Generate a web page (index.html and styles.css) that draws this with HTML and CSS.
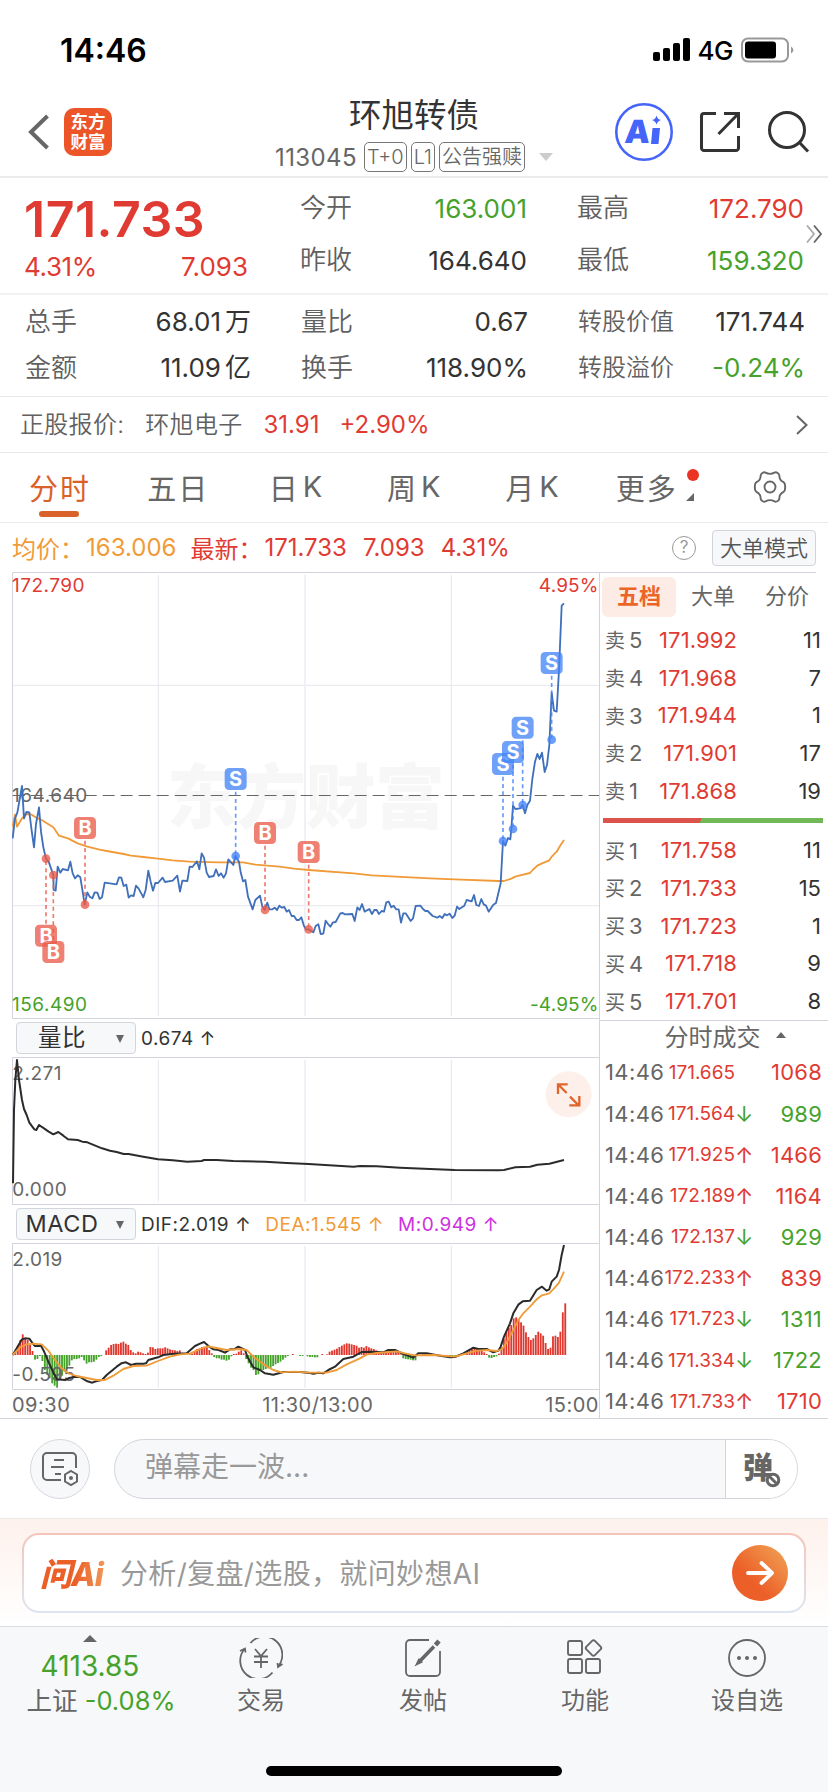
FILE: index.html
```html
<!DOCTYPE html>
<html lang="zh-CN">
  <head>
    <meta charset="utf-8">
    <title>环旭转债 113045</title>
    <link rel="stylesheet" href="styles.css">
  </head>
  <body>
    <div class="status-bar">
      <span class="clock">14:46</span>
      <div class="status-icons">
        <svg width="37" height="24" viewBox="0 0 37 24">
          <rect x="0" y="14" width="7" height="9" rx="2"/>
          <rect x="10" y="10" width="7" height="13" rx="2"/>
          <rect x="20" y="5" width="7" height="18" rx="2"/>
          <rect x="30" y="0" width="7" height="23" rx="2"/>
        </svg>
        <span class="network">4G</span>
        <svg width="54" height="26" viewBox="0 0 54 26">
          <rect x="1" y="1.500" width="46" height="23" rx="6" fill="none" stroke="#999" stroke-width="2"/>
          <rect x="4" y="4.500" width="31" height="17" rx="3"/>
          <path d="M50 9.500q5 3.500 0 7z" fill="#999"/>
        </svg>
      </div>
    </div>

    <header class="header">
      <div class="header-left">
        <svg width="22" height="36" viewBox="0 0 22 36" fill="none" stroke="#666" stroke-width="4"><path d="M19.500 2 3 18l16.500 16"/></svg>
        <div class="app-logo"><span>东方</span><span>财富</span></div>
      </div>
      <div class="header-title">
        <h1>环旭转债</h1>
        <div class="sub">
          <span class="code">113045</span>
          <span class="tag">T+0</span>
          <span class="tag">L1</span>
          <span class="tag">公告强赎</span>
          <svg class="drop" width="14" height="8" viewBox="0 0 14 8"><path d="M0 0h14L7 8z" fill="#ccc"/></svg>
        </div>
      </div>
      <div class="header-right">
        <svg width="60" height="60" viewBox="0 0 60 60">
          <circle cx="30" cy="30" r="27.700" fill="none" stroke="#4565f8" stroke-width="2.600"/>
          <text class="ai-text" x="11" y="41" transform="skewX(-4) translate(2 0)">A</text>
          <path d="M38.500 26h7.500l-1.500 16H37z M42.500 13.500q1 4 4.500 4.500-3.500 1-4.500 4.500-1-3.500-4.500-4.500 3.500-.5 4.500-4.500z" fill="#4565f8"/>
        </svg>
        <svg width="44" height="44" viewBox="0 0 44 44" fill="none" stroke="#333" stroke-width="3">
          <path d="M18 3.500H6a2.500 2.500 0 0 0-2.500 2.500v32A2.500 2.500 0 0 0 6 40.500h32a2.500 2.500 0 0 0 2.500-2.500V26M26 3.500h14.500V18M40 4 20.500 24"/>
        </svg>
        <svg width="44" height="44" viewBox="0 0 44 44" fill="none" stroke="#333" stroke-width="3">
          <circle cx="21" cy="20" r="17.500"/><path d="M33 32l9 9.500"/>
        </svg>
      </div>
    </header>

    <section class="quote">
      <div class="last">
        <div class="last-price red">171.733</div>
        <div class="last-change red"><span>4.31%</span><span>7.093</span></div>
      </div>
      <dl class="pairs">
        <div><dt>今开</dt><dd class="green">163.001</dd></div>
        <div><dt>最高</dt><dd class="red">172.790</dd></div>
        <div><dt>昨收</dt><dd>164.640</dd></div>
        <div><dt>最低</dt><dd class="green">159.320</dd></div>
      </dl>
      <svg class="more" width="16" height="18" viewBox="0 0 16 18" fill="none" stroke-width="1.800">
        <path d="M1 .5 8 9l-7 8.500" stroke="#aaa"/><path d="M8 .5 15 9l-7 8.500" stroke="#666"/>
      </svg>
    </section>

    <dl class="stats">
      <div><dt>总手</dt><dd>68.01<i>万</i></dd></div>
      <div><dt>量比</dt><dd>0.67</dd></div>
      <div><dt class="long">转股价值</dt><dd>171.744</dd></div>
      <div><dt>金额</dt><dd>11.09<i>亿</i></dd></div>
      <div><dt>换手</dt><dd>118.90%</dd></div>
      <div><dt class="long">转股溢价</dt><dd class="green">-0.24%</dd></div>
    </dl>

    <div class="underlying">
      <span class="u-label">正股报价:</span>
      <span class="u-name">环旭电子</span>
      <span class="u-price red">31.91</span>
      <span class="red">+2.90%</span>
      <svg width="12" height="20" viewBox="0 0 12 20" fill="none" stroke="#666" stroke-width="2"><path d="M1 1l9.500 9L1 19"/></svg>
    </div>

    <nav class="tabs">
      <a class="active">分时</a>
      <a>五日</a>
      <a>日<i>K</i></a>
      <a>周<i>K</i></a>
      <a>月<i>K</i></a>
      <a class="tab-more">更多<svg width="8" height="8" viewBox="0 0 8 8"><path d="M8 0v8H0z" fill="#666"/></svg><b class="dot"></b></a>
      <a>
        <svg width="34" height="34" viewBox="0 0 34 34" fill="none" stroke="#666" stroke-width="1.900">
          <path d="M12.500 2.600q4.500 2.600 9 0 1.500-.7 3.200.4 1.700 1.200 1.700 2.800-.2 4.200 4.200 6.400 1.600 1 1.600 4.800t-1.600 4.800q-4.400 2.200-4.200 6.400 0 1.600-1.700 2.800-1.700 1.100-3.200.4-4.500-2.600-9 0-1.500.7-3.200-.4-1.700-1.200-1.700-2.800.2-4.200-4.200-6.400Q1.800 20.800 1.800 17t1.600-4.800q4.400-2.200 4.200-6.400 0-1.600 1.700-2.800 1.700-1.100 3.200-.4z"/>
          <circle cx="17" cy="17" r="5.500"/>
        </svg>
      </a>
    </nav>

    <div class="summary">
      <span class="orange">均价：</span><span class="orange num">163.006</span>
      <span class="red">最新：</span><span class="red num">171.733</span>
      <span class="red num">7.093</span>
      <span class="red num">4.31%</span>
      <span class="help">?</span>
      <button type="button" class="mode">大单模式</button>
    </div>

    <main class="board">
      <div class="charts">
        <!-- chart units are thirds of a pixel -->
        <svg class="chart price-chart" viewBox="36 36 1761 1341">
          <g class="watermark"><text x="500" y="790" textLength="835">东方财富</text></g>
          <g class="grid">
            <path d="M38 376H1797M38 1037H1797M475 44V1368M1354 44V1368"/>
            <path class="mid" d="M915 44V1368"/>
          </g>
          <path class="frame" d="M1797 37.500H37.500V1375.500H1797"/>
          <path class="prev-close" d="M38 706.500H1797"/>
          <text class="axis" x="36" y="726">164.640</text>
          <polyline class="line-avg" points="38,800 45,764 51,800 66,775 80,762 95,764 110,774 125,780 160,802 177,827 204,835 233,850 262,860 299,869 320,873 371,882 393,887 430,891 474,896 518,901 569,905 656,907 729,907 766,914 838,920 882,926 926,930 1061,940 1115,946 1188,950 1290,955 1364,958 1495,963 1512,963 1534,956 1546,950 1560,946 1590,939 1598,930 1612,917 1626,910 1648,901 1655,890 1670,875 1680,858 1692,840"/>
          <polyline class="line-price" points="38,835 45,775 52,758 66,678 72,775 79,756 88,757 95,812 102,862 108,792 117,742 123,815 130,862 138,896 146,905 153,925 160,945 161,990 167,992 173,920 181,938 188,927 204,931 211,905 218,940 225,955 233,946 241,952 248,995 254,1034 262,997 269,1010 277,1015 284,997 292,998 299,1017 306,1012 314,968 350,973 357,952 364,953 371,978 379,974 386,1013 393,1006 401,1008 408,977 416,986 430,1012 437,990 445,932 452,965 459,992 466,969 474,969 488,953 495,966 518,962 532,947 540,995 547,962 562,963 569,920 577,921 591,904 598,928 605,880 612,893 620,938 627,951 641,948 648,928 656,948 663,940 671,953 678,940 685,898 700,915 706,888 717,905 722,937 729,964 736,960 744,1010 758,1048 766,1020 780,1007 787,1040 794,1050 802,1028 808,1048 817,1048 824,1043 831,1050 838,1037 846,1043 853,1041 860,1055 867,1050 875,1068 882,1068 890,1080 897,1080 904,1072 912,1098 918,1108 926,1108 940,1117 947,1098 955,1093 962,1122 970,1121 977,1082 984,1092 991,1100 999,1087 1007,1086 1021,1060 1028,1059 1035,1063 1057,1062 1064,1083 1072,1042 1079,1050 1086,1032 1094,1055 1108,1047 1116,1062 1123,1050 1130,1050 1137,1062 1145,1053 1152,1055 1159,1027 1166,1025 1174,1042 1181,1037 1188,1048 1196,1048 1203,1088 1210,1060 1217,1060 1232,1083 1239,1075 1247,1038 1261,1037 1269,1047 1276,1053 1283,1053 1298,1068 1312,1073 1319,1068 1327,1074 1334,1062 1341,1066 1349,1061 1357,1074 1364,1067 1371,1040 1378,1047 1393,1037 1400,1020 1415,1024 1422,1005 1429,1035 1437,1038 1444,1017 1451,1033 1458,1037 1466,1055 1480,1034 1488,1029 1495,1000 1502,970 1509,843 1516,857 1524,834 1531,838 1534,807 1539,737 1546,747 1560,745 1568,735 1575,760 1582,735 1590,722 1597,657 1605,605 1612,582 1619,597 1626,578 1634,636 1641,615 1648,555 1655,398 1662,452 1670,455 1677,330 1685,137 1692,130"/>
          <g id="trades"></g>
          <text class="axis up" x="36" y="95">172.790</text>
          <text class="axis up end" x="1796" y="95">4.95%</text>
          <text class="axis down" x="36" y="1352">156.490</text>
          <text class="axis down end" x="1796" y="1352">-4.95%</text>
        </svg>

        <div class="indicator">
          <div class="picker"><span>量比</span><i></i></div>
          <span>0.674 <em>↑</em></span>
        </div>
        <svg class="chart ratio-chart" viewBox="36 141 1761 444">
          <g class="grid">
            <path d="M475 150V575M1354 150V575"/>
            <path class="mid" d="M915 150V575"/>
          </g>
          <path class="frame" d="M1797 142.500H37.500V583.500H1797"/>
          <text class="axis" x="37" y="209">2.271</text>
          <text class="axis" x="37" y="557">0.000</text>
          <polyline class="line-dark" points="39,520 42,300 46,210 51,150 57,210 66,270 72,297 80,315 88,338 103,358 109,360 117,345 132,355 146,365 160,373 175,366 190,377 204,388 233,390 247,395 262,397 306,415 330,422 350,426 371,432 386,432 430,440 474,448 518,451 562,455 605,453 612,450 650,450 700,453 795,455 860,459 926,462 1061,470 1080,468 1130,469 1200,473 1290,477 1364,480 1495,481 1512,480 1546,472 1590,470 1612,464 1648,461 1692,450"/>
          <circle cx="1706" cy="253" r="69" fill="#fdf0ea"/>
          <path d="M1700 249L1676 225M1674 252V223H1703M1710 260L1735 285M1738 258V286H1708" fill="none" stroke="#e0652c" stroke-width="7"/>
        </svg>

        <div class="indicator">
          <div class="picker"><span>MACD</span><i></i></div>
          <span class="dif">DIF:2.019 <em>↑</em></span>
          <span class="orange dea">DEA:1.545 <em>↑</em></span>
          <span class="purple">M:0.949 <em>↑</em></span>
        </div>
        <svg class="chart macd-chart" viewBox="36 699 1761 441">
          <g class="grid">
            <path d="M475 708V1133M1354 708V1133"/>
            <path class="mid" d="M915 708V1133"/>
          </g>
          <path class="frame" d="M1797 700.500H37.500V1138.500H1797"/>
          <g id="macd-bars"></g>
          <text class="axis" x="37" y="767">2.019</text>
          <text class="axis" x="37" y="1114">-0.595</text>
          <polyline class="line-dark" points="38,1035 50,1015 66,988 75,985 88,986 100,1003 105,1008 123,1007 131,1022 145,1055 160,1088 171,1108 195,1110 208,1104 225,1100 240,1101 262,1114 277,1118 290,1113 306,1110 320,1095 350,1070 364,1060 378,1057 393,1065 408,1061 430,1061 438,1060 445,1050 474,1042 490,1035 520,1031 560,1030 585,1008 600,1001 612,996 628,1010 640,1018 656,1020 675,1028 690,1018 702,1018 715,1010 735,1020 742,1040 760,1072 780,1080 795,1090 820,1094 850,1086 900,1086 930,1089 940,1091 955,1088 970,1090 985,1080 1005,1070 1030,1047 1060,1040 1085,1026 1110,1025 1150,1027 1165,1020 1185,1020 1210,1032 1240,1043 1255,1030 1280,1030 1320,1037 1350,1042 1365,1041 1390,1030 1420,1013 1435,1017 1460,1017 1480,1027 1495,1022 1502,1010 1512,980 1530,940 1540,910 1555,884 1568,874 1590,872 1610,840 1626,830 1640,842 1648,838 1655,815 1670,800 1677,780 1685,735 1692,705"/>
          <polyline class="line-avg" points="38,1035 60,1012 80,1003 100,1001 125,1003 145,1022 165,1050 185,1075 205,1090 230,1098 260,1104 290,1110 315,1110 340,1097 370,1077 400,1068 440,1067 474,1053 510,1040 540,1033 570,1031 600,1017 625,1009 650,1014 680,1020 720,1017 740,1020 760,1040 790,1063 820,1080 845,1087 880,1085 930,1088 950,1088 980,1088 1010,1080 1040,1063 1080,1045 1100,1034 1130,1029 1190,1024 1215,1030 1245,1036 1300,1035 1365,1040 1400,1030 1430,1022 1460,1020 1490,1023 1505,1018 1520,998 1540,960 1555,930 1570,910 1590,890 1610,868 1626,856 1648,850 1665,832 1677,818 1692,785"/>
        </svg>
        <div class="times"><span>09:30</span><span>11:30/13:00</span><span>15:00</span></div>
      </div>

      <aside class="side">
        <div class="side-tabs"><span class="active">五档</span><span>大单</span><span>分价</span></div>
        <div class="book">
          <div><span>卖<b>5</b></span><span class="red">171.992</span><span>11</span></div>
          <div><span>卖<b>4</b></span><span class="red">171.968</span><span>7</span></div>
          <div><span>卖<b>3</b></span><span class="red">171.944</span><span>1</span></div>
          <div><span>卖<b>2</b></span><span class="red">171.901</span><span>17</span></div>
          <div><span>卖<b>1</b></span><span class="red">171.868</span><span>19</span></div>
        </div>
        <div class="ratio-bar"></div>
        <div class="book">
          <div><span>买<b>1</b></span><span class="red">171.758</span><span>11</span></div>
          <div><span>买<b>2</b></span><span class="red">171.733</span><span>15</span></div>
          <div><span>买<b>3</b></span><span class="red">171.723</span><span>1</span></div>
          <div><span>买<b>4</b></span><span class="red">171.718</span><span>9</span></div>
          <div><span>买<b>5</b></span><span class="red">171.701</span><span>8</span></div>
        </div>
        <div class="ticks-title">分时成交<svg width="10" height="6" viewBox="0 0 10 6"><path d="M5 0l5 6H0z" fill="#666"/></svg></div>
        <div class="ticks">
          <div><span>14:46</span><span class="red">171.665</span><em></em><span class="red">1068</span></div>
          <div><span>14:46</span><span class="red">171.564</span><em class="green">↓</em><span class="green">989</span></div>
          <div><span>14:46</span><span class="red">171.925</span><em class="red">↑</em><span class="red">1466</span></div>
          <div><span>14:46</span><span class="red">172.189</span><em class="red">↑</em><span class="red">1164</span></div>
          <div><span>14:46</span><span class="red">172.137</span><em class="green">↓</em><span class="green">929</span></div>
          <div><span>14:46</span><span class="red">172.233</span><em class="red">↑</em><span class="red">839</span></div>
          <div><span>14:46</span><span class="red">171.723</span><em class="green">↓</em><span class="green">1311</span></div>
          <div><span>14:46</span><span class="red">171.334</span><em class="green">↓</em><span class="green">1722</span></div>
          <div><span>14:46</span><span class="red">171.733</span><em class="red">↑</em><span class="red">1710</span></div>
        </div>
      </aside>
    </main>

    <div class="danmu">
      <div class="danmu-set">
        <svg width="38" height="36" viewBox="0 0 38 36" fill="none" stroke="#666" stroke-width="2">
          <path d="M20 29H6a4 4 0 0 1-4-4V6a4 4 0 0 1 4-4h25a4 4 0 0 1 4 4v11M13 9h10M10 16h13M14 23h6"/>
          <path d="M30 20l6 3.500v7L30 34l-6-3.500v-7z"/><circle cx="30" cy="27" r="1" fill="#666"/>
        </svg>
      </div>
      <div class="danmu-input">
        <span>弹幕走一波...</span>
        <div class="danmu-off">
          <b>弹</b>
          <svg width="16" height="16" viewBox="0 0 16 16" fill="#fff" stroke="#666" stroke-width="3"><circle cx="8" cy="8" r="5.800"/><path d="M4 4l8 8"/></svg>
        </div>
      </div>
    </div>

    <div class="ask">
      <div class="ask-box">
        <span class="ask-logo">问Ai</span>
        <span class="ask-hint">分析/复盘/选股，就问妙想AI</span>
        <div class="ask-go">
          <svg width="28" height="24" viewBox="0 0 28 24" fill="none" stroke="#fff" stroke-width="3.800" stroke-linecap="round" stroke-linejoin="round"><path d="M2 12h24M15.500 2 26 12 15.500 22"/></svg>
        </div>
      </div>
    </div>

    <footer class="bottom">
      <div class="index">
        <svg width="14" height="7" viewBox="0 0 14 7"><path d="M7 0l7 7H0z" fill="#666"/></svg>
        <span class="green index-value">4113.85</span>
        <span class="index-name">上证 <span class="green">-0.08%</span></span>
      </div>
      <div class="item">
        <svg width="44" height="40" viewBox="0 0 44 40" fill="none" stroke="#666" stroke-width="1.800">
          <path d="M11.500 5A18 18 0 0 1 39 28.500M33.500 34.500A18 18 0 0 1 5.500 11M1 13l5-2.500.5 4M38.500 25l.5 4 4.500-3M16 11l6 7 6-7M15 18.500h14M15 24h14M22 18v12"/>
        </svg>
        <span>交易</span>
      </div>
      <div class="item">
        <svg width="44" height="40" viewBox="0 0 44 40" fill="none" stroke="#666" stroke-width="1.800">
          <path d="M28 2H9a4 4 0 0 0-4 4v28a4 4 0 0 0 4 4h26a4 4 0 0 0 4-4V13"/>
          <path d="M18 24 33 8.500" stroke-width="3.600"/><path d="M34.500 7 38 3" stroke-width="4.500"/><path d="M15.500 26.500l5-2.500-2.500-2.500z" fill="#666"/>
        </svg>
        <span>发帖</span>
      </div>
      <div class="item">
        <svg width="44" height="40" viewBox="0 0 44 40" fill="none" stroke="#666" stroke-width="1.900">
          <rect x="5" y="3" width="14" height="14" rx="2"/><rect x="5" y="21" width="14" height="14" rx="2"/><rect x="23" y="21" width="14" height="14" rx="2"/>
          <rect x="24.500" y="4" width="12" height="12" rx="2" transform="rotate(45 30.500 10)"/>
        </svg>
        <span>功能</span>
      </div>
      <div class="item">
        <svg width="44" height="40" viewBox="0 0 44 40" fill="none" stroke="#666" stroke-width="1.800">
          <circle cx="22" cy="20" r="18"/><g fill="#666" stroke="none"><circle cx="14" cy="20" r="2"/><circle cx="22" cy="20" r="2"/><circle cx="30" cy="20" r="2"/></g>
        </svg>
        <span>设自选</span>
      </div>
      <div class="home-bar"></div>
    </footer>

    <script src="chart.js"></script>
  </body>
</html>
```

FILE: styles.css
```css
* {
  box-sizing: border-box;
}
body {
  margin: 0;
  width: 828px;
  height: 1792px;
  background: #fff;
  color: #333;
  font-family: Inter, "Noto Sans CJK SC", sans-serif;
  font-size: 26px;
  overflow: hidden;
}
h1, dl, dd {
  margin: 0;
}
svg {
  display: block;
  flex: none;
}
i, em {
  font-style: normal;
}
.red { color: #df3b33; }
.green { color: #46a22b; }
.orange { color: #f09b37; }
.purple { color: #cc33dd; }

/* status bar */
.status-bar {
  display: flex;
  justify-content: space-between;
  align-items: center;
  height: 88px;
  padding: 12px 33px 0 60px;
  color: #000;
}
.clock {
  font-size: 32px;
  font-weight: 600;
}
.status-icons {
  display: flex;
  align-items: center;
}
.network {
  margin: 0 8px;
  font-size: 26px;
  font-weight: 500;
  letter-spacing: -0.5px;
}

/* header */
.header {
  display: flex;
  justify-content: space-between;
  height: 90px;
  padding: 0 18px 0 28px;
  border-bottom: 2px solid #ebebec;
}
.header-left,
.header-right {
  display: flex;
  align-items: center;
}
.header-left {
  gap: 14px;
  width: 190px;
}
.header-right {
  justify-content: flex-end;
  gap: 24px;
  width: 200px;
}
.app-logo {
  display: flex;
  flex-direction: column;
  justify-content: center;
  width: 48px;
  height: 48px;
  border-radius: 10px;
  background: #ec5528;
  color: #fff;
  font-size: 17.5px;
  font-weight: 700;
  line-height: 20px;
  text-align: center;
}
.header-title {
  display: flex;
  flex-direction: column;
  align-items: center;
  width: 290px;
}
h1 {
  margin-top: 5px;
  font-size: 32.5px;
  font-weight: 400;
  line-height: 46px;
}
.sub {
  display: flex;
  align-items: center;
  gap: 4px;
  height: 36px;
  color: #666;
  font-size: 24px;
  white-space: nowrap;
}
.code {
  margin-right: 3px;
  letter-spacing: 0.4px;
}
.tag {
  height: 30px;
  padding: 0 2px;
  border: 1px solid #777;
  border-radius: 5px;
  font-size: 20px;
  font-weight: 350;
  line-height: 28px;
}
.drop {
  margin-left: 10px;
}
.ai-text {
  fill: #4565f8;
  font-size: 32px;
  font-weight: 900;
}

/* quotes */
.quote {
  position: relative;
  display: flex;
  height: 117px;
  padding-left: 25px;
  border-bottom: 2px solid #f2f2f3;
}
.last {
  width: 275px;
}
.last-price {
  margin: 11px 0 0 -1px;
  font-size: 50px;
  font-weight: 600;
  line-height: 60px;
  letter-spacing: 0.5px;
}
.last-change {
  display: flex;
  justify-content: space-between;
  width: 223px;
  line-height: 36px;
}
.last-change span:first-child {
  margin-left: -1px;
  letter-spacing: -0.4px;
}
.pairs {
  display: grid;
  grid-template-columns: 227px 227px;
  grid-auto-rows: 52px;
  column-gap: 50px;
  padding-top: 4px;
}
.pairs > div,
.stats > div {
  display: flex;
  justify-content: space-between;
  align-items: center;
}
dt {
  color: #606060;
  font-weight: 350;
  line-height: 36px;
}
dt.long {
  font-size: 24px;
}
.more {
  position: absolute;
  right: 6px;
  top: 47px;
}
.stats {
  display: grid;
  grid-template-columns: 226px 227px 227px;
  grid-auto-rows: 46px;
  column-gap: 50px;
  height: 102px;
  padding: 4px 0 0 25px;
  border-bottom: 1px solid #e9e9eb;
}
.stats dd {
  line-height: 36px;
}
.stats i {
  margin-left: 4px;
}

.underlying {
  display: flex;
  align-items: center;
  height: 56px;
  padding: 0 20px;
  border-bottom: 1px solid #e9e9eb;
  font-size: 24px;
  line-height: 36px;
}
.u-label,
.u-name {
  color: #606060;
  font-weight: 350;
  letter-spacing: 0.3px;
}
.u-label { margin-right: 21px; }
.u-name { margin-right: 21px; }
.u-price { margin-right: 20px; }
.underlying svg {
  margin-left: auto;
}

/* period tabs */
.tabs {
  display: flex;
  height: 70px;
  border-bottom: 1px solid #e9e9eb;
}
.tabs a {
  position: relative;
  display: flex;
  flex: none;
  align-items: center;
  justify-content: center;
  width: 14.28%;
  padding: 0 0 2px 2px;
  color: #666;
  font-size: 29px;
  letter-spacing: 2px;
}
.tabs i {
  margin-left: 3px;
}
.tabs .active {
  color: #d9622b;
}
.tabs .active::after {
  content: "";
  position: absolute;
  left: 39px;
  bottom: 5px;
  width: 40px;
  height: 6px;
  border-radius: 3px;
  background: #d9622b;
}
.tabs .tab-more {
  padding-left: 9px;
}
.tab-more svg {
  margin: 20px 0 0 8px;
}
.dot {
  position: absolute;
  right: 10px;
  top: 16px;
  width: 12px;
  height: 12px;
  border-radius: 50%;
  background: #ea3323;
}

.summary {
  display: flex;
  align-items: center;
  height: 49px;
  padding: 0 12px;
  font-size: 24px;
  white-space: nowrap;
}
.num {
  margin: 0 14px 0 2px;
}
.help {
  width: 24px;
  height: 24px;
  margin-left: auto;
  border: 1.5px solid #999;
  border-radius: 50%;
  color: #999;
  font-size: 17px;
  line-height: 21px;
  text-align: center;
}
.mode {
  width: 104px;
  height: 36px;
  margin-left: 16px;
  padding: 0;
  border: 1px solid #d2d4da;
  border-radius: 4px;
  background: #f7f8fa;
  color: #555;
  font: 350 22px/32px Inter, "Noto Sans CJK SC", sans-serif;
}

/* charts */
.board {
  display: flex;
  height: 847px;
  border-bottom: 1px solid #d3d3db;
}
.charts {
  flex: none;
  width: 600px;
  padding-left: 12px;
  border-right: 1px solid #d3d3db;
}
.chart {
  width: 587px;
}
.price-chart { height: 447px; }
.ratio-chart { height: 148px; }
.macd-chart { height: 147px; }
.grid path {
  fill: none;
  stroke: #e6e6ed;
  stroke-width: 3;
}
.grid .mid {
  stroke: #f0f0f7;
  stroke-width: 6;
}
.frame {
  fill: none;
  stroke: #d3d3db;
  stroke-width: 3;
}
.watermark text {
  fill: #f7f7f8;
  font-size: 210px;
  font-weight: 900;
}
.prev-close {
  stroke: #666;
  stroke-width: 3;
  stroke-dasharray: 36 18;
}
.line-price,
.line-avg,
.line-dark {
  fill: none;
  stroke-width: 5.5;
  stroke-linejoin: round;
}
.line-price { stroke: #4170bb; }
.line-avg { stroke: #f09b37; }
.line-dark {
  stroke: #2b2b2b;
  stroke-width: 6;
}
.axis {
  fill: #666;
  font-size: 57px;
  letter-spacing: 1.5px;
}
.axis.up { fill: #df3b33; }
.axis.down { fill: #46a22b; }
.axis.end {
  letter-spacing: 0.5px;
  text-anchor: end;
}
.mark-text {
  fill: #fff;
  font-size: 60px;
  font-weight: 700;
  text-anchor: middle;
}

.indicator {
  display: flex;
  align-items: center;
  height: 38px;
  padding-left: 4px;
  font-size: 19px;
  letter-spacing: 0.5px;
  white-space: nowrap;
}
.picker {
  position: relative;
  width: 120px;
  height: 32px;
  margin-right: 5px;
  padding-right: 28px;
  border: 1px solid #d3d5dc;
  border-radius: 4px;
  background: #f7f8fa;
  font-size: 23.5px;
  line-height: 30px;
  text-align: center;
}
.picker i {
  position: absolute;
  right: 11px;
  top: 12px;
  border: 4.5px solid transparent;
  border-top: 8px solid #666;
  border-bottom: 0;
}
.dif { margin-right: 14px; }
.dea { margin-right: 14px; }
.times {
  display: flex;
  justify-content: space-between;
  color: #666;
  font-size: 20px;
  line-height: 31px;
  letter-spacing: 0.5px;
}
.times span:nth-child(2) {
  margin-left: 20px;
}

/* order book and trades */
.side {
  flex: 1;
  min-width: 0;
}
.side-tabs {
  display: flex;
  height: 46px;
  padding: 5px 0 0 2px;
  background: linear-gradient(#d3d3db, #d3d3db) 0 0 / 216px 1px no-repeat;
  color: #666;
  font-size: 22px;
  line-height: 39px;
  text-align: center;
}
.side-tabs span {
  width: 74px;
}
.side-tabs .active {
  height: 40px;
  border-radius: 6px;
  background: #fdece5;
  color: #ec6527;
  font-weight: 700;
}
.book {
  padding: 3px 7px 0 5px;
  font-size: 22px;
}
.book div {
  display: flex;
  align-items: center;
  height: 37.7px;
}
.book span:nth-child(1) {
  width: 42px;
  color: #666;
  font-size: 20px;
}
.book b {
  margin-left: 4px;
  font-size: 22px;
  font-weight: 400;
}
.book span:nth-child(2) {
  width: 90px;
  text-align: right;
  letter-spacing: 0.1px;
}
.book span:nth-child(3) {
  flex: 1;
  text-align: right;
}
.ratio-bar {
  height: 5px;
  margin: 9px 5px 5px 3px;
  background: linear-gradient(120deg, #dc534d 44.5%, #73b857 44.5%);
}
.ticks-title {
  display: flex;
  align-items: center;
  justify-content: center;
  gap: 15px;
  height: 32px;
  padding: 0 0 2px 22px;
  border-top: 1px solid #d3d3db;
  color: #666;
  font-size: 24px;
}
.ticks {
  padding: 0 6px 0 5px;
  font-size: 22px;
}
.ticks div {
  display: flex;
  align-items: center;
  height: 41.1px;
}
.ticks span:nth-child(1) {
  width: 58px;
  color: #666;
  letter-spacing: 0.4px;
}
.ticks span:nth-child(2) {
  width: 72px;
  font-size: 19px;
  text-align: right;
}
.ticks em {
  width: 14px;
}
.ticks span:last-child {
  flex: 1;
  text-align: right;
  letter-spacing: 0.2px;
}

/* danmu */
.danmu {
  display: flex;
  gap: 24px;
  height: 100px;
  padding: 20px 30px;
  border-bottom: 1px solid #e9e9eb;
}
.danmu-set {
  display: flex;
  align-items: center;
  justify-content: center;
  width: 60px;
  height: 60px;
  border: 1px solid #d7d8de;
  border-radius: 50%;
  background: #f7f8fa;
}
.danmu-input {
  display: flex;
  flex: 1;
  justify-content: space-between;
  height: 60px;
  padding-left: 30px;
  border: 1px solid #d3d5db;
  border-radius: 30px;
  background: #f7f8fa;
  color: #999;
  font-size: 28px;
  line-height: 54px;
  overflow: hidden;
}
.danmu-off {
  position: relative;
  width: 72px;
  padding-left: 17px;
  border-left: 1px solid #d3d5db;
  background: #fff;
  color: #666;
}
.danmu-off b {
  font-size: 30px;
  font-weight: 900;
}
.danmu-off svg {
  position: absolute;
  left: 39px;
  top: 32px;
}

/* ask ai */
.ask {
  height: 108px;
  padding: 14px 22px;
  border-bottom: 1px solid #dcdce0;
  background: linear-gradient(#fef1ec, #fff);
}
.ask-box {
  display: flex;
  align-items: center;
  height: 80px;
  padding: 0 16px;
  border: 2px solid transparent;
  border-radius: 17px;
  background: linear-gradient(#fff, #fff) padding-box, linear-gradient(#f5c4ba, #dde5f3) border-box;
}
.ask-logo {
  width: 70px;
  margin-right: 10px;
  padding-bottom: 2px;
  background: linear-gradient(90deg, #ec6028 50%, #f0a060);
  background-clip: text;
  -webkit-background-clip: text;
  color: transparent;
  font-size: 32px;
  font-weight: 800;
  font-style: italic;
  letter-spacing: -1px;
  white-space: nowrap;
}
.ask-hint {
  padding-bottom: 3px;
  color: #999;
  font-size: 28px;
  letter-spacing: 0.35px;
}
.ask-go {
  display: flex;
  align-items: center;
  justify-content: center;
  width: 56px;
  height: 56px;
  margin-left: auto;
  border-radius: 50%;
  background: linear-gradient(45deg, #ec5f28 35%, #f0964c 85%);
}

/* bottom bar */
.bottom {
  position: relative;
  display: flex;
  height: 165px;
  background: #f7f8fa;
  color: #666;
  font-size: 24px;
}
.index {
  display: flex;
  flex-direction: column;
  align-items: center;
  width: 180px;
  padding-top: 8px;
  white-space: nowrap;
}
.index-value {
  margin-top: 8px;
  font-size: 28px;
  line-height: 32px;
}
.index-name {
  margin-left: 22px;
  font-size: 25.5px;
  line-height: 37px;
}
.item {
  display: flex;
  flex: 1;
  flex-direction: column;
  align-items: center;
  padding-top: 11px;
  line-height: 45px;
}
.home-bar {
  position: absolute;
  left: 266px;
  bottom: 16px;
  width: 296px;
  height: 10px;
  border-radius: 5px;
  background: #000;
}
```

FILE: chart.js
```js
const NS = 'http://www.w3.org/2000/svg';

function add(parent, name, attrs, text) {
  const el = document.createElementNS(NS, name);
  for (const key in attrs) el.setAttribute(key, attrs[key]);
  if (text) el.textContent = text;
  parent.appendChild(el);
}

// one value per minute, positive = red, negative = green
const macd = [
  0, 12, 28, 45, 62, 50, 45, 30, 12, -14, -12, -3, -18, -45, -60, -70, -85, -92, -98, -75,
  -62, -50, -42, -32, -16, -12, -12, -10, -6, -16, -26, -22, -22, -20, -14, -6, -3, 0, 14, 22,
  30, 33, 34, 33, 37, 40, 34, 30, 15, 8, 5, 10, 8, 5, 3, 7, 24, 23, 18, 20,
  20, 20, 23, 20, 17, 15, 14, 12, 14, 0, 0, 0, 2, 4, 10, 18, 20, 24, 25, 26,
  15, 5, -6, -10, -10, -14, -14, -17, -14, -4, 3, 4, 10, 14, 5, -12, -25, -38, -45, -60,
  -58, -48, -45, -42, -40, -38, -33, -28, -24, -20, -14, -8, -3, 0, 3, 0, 0, -3, -3, 0,
  -4, -6, -6, -7, -7, 0, 3, 0, 2, 10, 13, 16, 19, 24, 28, 32, 35, 34, 32, 30,
  28, 22, 24, 22, 27, 23, 20, 18, 14, 8, 8, 7, 8, 10, 12, 12, 11, 10, 2, -10,
  -12, -13, -14, -16, -16, -3, 0, 2, 3, 2, 0, 0, -2, -2, -3, -4, -4, -3, -3, -3,
  -2, 0, 3, 5, 8, 13, 18, 18, 20, 19, 20, 16, 8, 3, -8, -9, -6, -4, 4, 22,
  48, 70, 82, 90, 110, 113, 108, 98, 88, 68, 54, 45, 50, 60, 70, 65, 58, 36, 18, 22,
  56, 58, 54, 70, 128, 155
];
const bars = document.getElementById('macd-bars');
const step = 1657 / (macd.length - 1);
macd.forEach((v, i) => {
  add(bars, 'rect', {
    x: 36 + i * step,
    y: v > 0 ? 1035 - v : 1035,
    width: 5.5,
    height: Math.abs(v),
    fill: v > 0 ? '#e0382e' : '#46a22b'
  });
});

// [type, x, badge centre y, dot y]
const trades = [
  ['B', 138, 1127, 896],
  ['B', 160, 1176, 945],
  ['B', 255, 804, 1034],
  ['S', 707, 657, 888],
  ['B', 795, 819, 1050],
  ['B', 926, 876, 1108],
  ['S', 1509, 612, 843],
  ['S', 1539, 576, 807],
  ['S', 1568, 503, 735],
  ['S', 1655, 309, 539]
];
const layer = document.getElementById('trades');
trades.forEach(([type, x, y, dot]) => {
  const color = type === 'B' ? '#ea5a48' : '#4283f7';
  const edge = y < dot ? y + 38 : y - 36;
  add(layer, 'path', {
    d: `M${x} ${edge}V${dot}`,
    stroke: color,
    'stroke-width': 5,
    'stroke-dasharray': '12 10',
    opacity: 0.8
  });
  add(layer, 'circle', { cx: x, cy: dot, r: 13, fill: color, opacity: 0.78 });
  add(layer, 'rect', { x: x - 33, y: y - 33, width: 66, height: 66, rx: 13, fill: color, opacity: 0.76 });
  add(layer, 'text', { x, y: y + 22, class: 'mark-text' }, type);
});
```
